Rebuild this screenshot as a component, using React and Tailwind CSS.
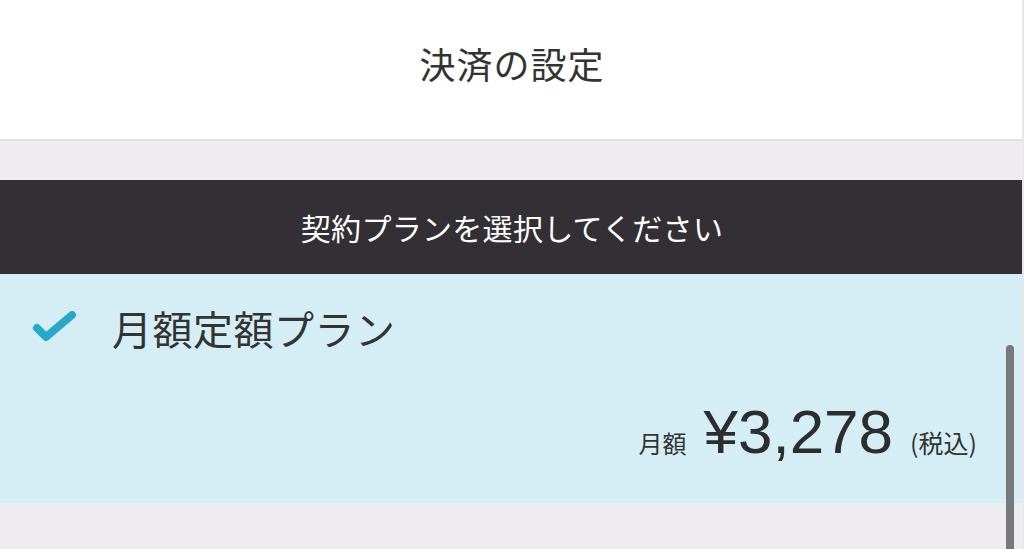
export default function App() {
  const jp = { fontFamily: '"Noto Sans CJK JP", "Noto Sans", sans-serif' };
  return (
    <div className="relative w-[1024px] h-[549px] overflow-hidden bg-[#efecf1]" style={jp}>
      <div className="h-[139px] bg-white flex items-center justify-center">
        <span className="text-[36px] text-[#333333] tracking-[1px] leading-none mt-[-14px]">決済の設定</span>
      </div>
      <div className="h-[2px] bg-[#e1e0e3]" />
      <div className="h-[39px] bg-[#efecf1]" />
      <div className="h-[94px] bg-[#333035] flex items-center justify-center">
        <span className="text-[30px] text-white leading-none tracking-[0.3px]">契約プランを選択してください</span>
      </div>
      <div className="h-[229px] bg-[#d5eef6] flex flex-col">
        <div className="flex items-center pl-[32px] pt-[34px]">
          <svg width="46" height="34" viewBox="0 0 46 34" className="shrink-0">
            <path d="M5 17 L14 26 L40 4" fill="none" stroke="#2aa8c8" strokeWidth="8" strokeLinecap="round" strokeLinejoin="round" />
          </svg>
          <span className="ml-[34px] text-[40px] text-[#333333] leading-none tracking-[0.5px]">月額定額プラン</span>
        </div>
        <div className="flex items-baseline justify-end pr-[47px] mt-[53px]">
          <span className="text-[24px] text-[#333333] mr-[17px]">月額</span>
          <span className="text-[62px] text-[#2d2d2d] leading-none" style={{ fontFamily: '"Liberation Sans", Arial, sans-serif' }}>¥3,278</span>
          <span className="text-[25px] text-[#333333] ml-[17px]">(税込)</span>
        </div>
      </div>
      <div className="absolute right-[10px] top-[345px] bottom-0 w-[8px] rounded-t-full bg-[#77777c]" />
      <div className="absolute right-0 top-0 bottom-0 w-[2px] bg-[#e8e8ea]" />
    </div>
  );
}
